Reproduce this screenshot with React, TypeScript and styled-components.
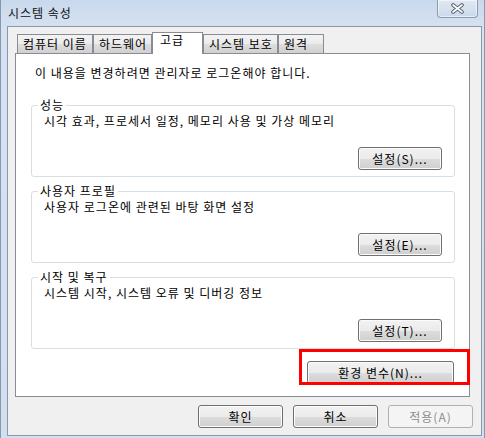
import React from 'react';
import styled, { createGlobalStyle } from 'styled-components';

const Global = createGlobalStyle`
  html, body { margin: 0; padding: 0; background: #ffffff; }
  body {
    font-family: "Noto Sans CJK KR", "Noto Sans", "Liberation Sans", sans-serif;
    font-size: 12px;
    letter-spacing: 1px;
    color: #000;
  }
  * { box-sizing: border-box; }
`;

const Window = styled.div`
  width: 485px;
  height: 438px;
  display: flex;
  flex-direction: column;
  padding: 0 2px 2px 6px;
  border-left: 1px solid #8797ad;
  border-right: 1px solid #8797ad;
  background: linear-gradient(180deg, #c9d9ed 0%, #d6e2f1 30px, #d2dfee 100%);
`;

const TitleBar = styled.div`
  height: 26px;
  flex: none;
  display: flex;
  align-items: flex-start;
  justify-content: space-between;
`;

const Title = styled.div`
  margin: 6px 0 0 1px;
  line-height: 14px;
  color: #111;
`;

const CloseButton = styled.div`
  width: 41px;
  height: 18px;
  margin-right: 4px;
  display: flex;
  align-items: center;
  justify-content: center;
  border: 1px solid #8a9ab0;
  border-top: none;
  border-radius: 0 0 4px 4px;
  background: linear-gradient(180deg, #dfe8f3 0%, #d7e2ef 50%, #cbd8e9 100%);
  box-shadow: inset 0 0 0 1px rgba(255, 255, 255, 0.55);
`;

const Client = styled.div`
  flex: 1;
  display: flex;
  flex-direction: column;
  border: 1px solid #8c98a8;
  background: #f0f0f0;
  padding: 5px 0 0 7px;
`;

const TabStrip = styled.div`
  display: flex;
  align-items: flex-end;
  margin: 0 0 -1px 2px;
  position: relative;
  z-index: 1;
`;

const Tab = styled.div<{ $w: number; $active?: boolean }>`
  width: ${(p) => p.$w}px;
  height: ${(p) => (p.$active ? 22 : 19)}px;
  margin-bottom: ${(p) => (p.$active ? 0 : 1)}px;
  border: 1px solid #898c95;
  border-bottom: none;
  padding-left: ${(p) => (p.$active ? 7 : 5)}px;
  line-height: ${(p) => (p.$active ? 14 : 17)}px;
  white-space: nowrap;
  overflow: hidden;
  background: ${(p) =>
    p.$active
      ? '#ffffff'
      : 'linear-gradient(180deg, #f3f3f3 0%, #ebebeb 50%, #dedede 51%, #d0d0d0 100%)'};
`;

const Panel = styled.div`
  margin-right: 11px;
  background: #ffffff;
  border: 1px solid #898c95;
  padding: 12px 14px 12px 15px;
  display: flex;
  flex-direction: column;
`;

const Notice = styled.div`
  line-height: 14px;
  margin-left: 4px;
`;

const Groups = styled.div`
  margin-top: 18px;
  display: flex;
  flex-direction: column;
  gap: 7px;
`;

const Group = styled.fieldset`
  margin: 0;
  min-width: 0;
  padding: 0 12px 6px 12px;
  border: 1px solid #d5dfe5;
  border-radius: 3px;
`;

const Legend = styled.legend`
  padding: 0 2px;
  margin-left: -6px;
  line-height: 14px;
  font-size: 12px;
`;

const Desc = styled.div`
  margin-top: 2px;
  line-height: 14px;
`;

const RightRow = styled.div<{ $mt: number; $pr?: number; $gap?: number }>`
  display: flex;
  justify-content: flex-end;
  margin-top: ${(p) => p.$mt}px;
  padding-right: ${(p) => p.$pr ?? 0}px;
  gap: ${(p) => p.$gap ?? 0}px;
`;

const WinButton = styled.button<{ $w: number }>`
  width: ${(p) => p.$w}px;
  height: 23px;
  padding: 0;
  font: inherit;
  font-size: 12px;
  letter-spacing: 1px;
  line-height: 21px;
  color: #000;
  border: 1px solid #707070;
  border-radius: 3px;
  background: linear-gradient(180deg, #f2f2f2 0%, #ebebeb 50%, #dddddd 51%, #cfcfcf 100%);
  box-shadow: inset 0 0 0 1px #fbfbfb;
  &:disabled {
    color: #8d8d8d;
    border-color: #adb2b5;
    background: #f4f4f4;
    box-shadow: none;
  }
`;

const Highlight = styled.div`
  position: relative;
  display: flex;
`;

const RedBox = styled.div`
  position: absolute;
  left: -8px;
  right: -16px;
  top: -12px;
  bottom: -1px;
  border: 3px solid #ff0000;
  pointer-events: none;
`;

const tabs = [
  { label: '컴퓨터 이름', w: 76 },
  { label: '하드웨어', w: 59 },
  { label: '고급', w: 51, active: true },
  { label: '시스템 보호', w: 75 },
  { label: '원격', w: 46 },
];

const groups = [
  { title: '성능', desc: '시각 효과, 프로세서 일정, 메모리 사용 및 가상 메모리', btn: '설정(S)...' },
  { title: '사용자 프로필', desc: '사용자 로그온에 관련된 바탕 화면 설정', btn: '설정(E)...' },
  { title: '시작 및 복구', desc: '시스템 시작, 시스템 오류 및 디버깅 정보', btn: '설정(T)...' },
];

const CloseIcon = () => (
  <svg width="15" height="11" viewBox="0 0 15 11">
    <path d="M3 2 L12 9 M12 2 L3 9" stroke="#5b6472" strokeWidth="3.6" strokeLinecap="round" fill="none" />
    <path d="M3 2 L12 9 M12 2 L3 9" stroke="#ffffff" strokeWidth="1.6" strokeLinecap="round" fill="none" />
  </svg>
);

export default function App() {
  return (
    <>
      <Global />
      <Window>
        <TitleBar>
          <Title>시스템 속성</Title>
          <CloseButton>
            <CloseIcon />
          </CloseButton>
        </TitleBar>
        <Client>
          <TabStrip>
            {tabs.map((t) => (
              <Tab key={t.label} $w={t.w} $active={t.active}>
                {t.label}
              </Tab>
            ))}
          </TabStrip>
          <Panel>
            <Notice>이 내용을 변경하려면 관리자로 로그온해야 합니다.</Notice>
            <Groups>
              {groups.map((g) => (
                <Group key={g.title}>
                  <Legend>{g.title}</Legend>
                  <Desc>{g.desc}</Desc>
                  <RightRow $mt={19}>
                    <WinButton $w={84}>{g.btn}</WinButton>
                  </RightRow>
                </Group>
              ))}
            </Groups>
            <RightRow $mt={12} $pr={1}>
              <Highlight>
                <WinButton $w={147}>환경 변수(N)...</WinButton>
                <RedBox />
              </Highlight>
            </RightRow>
          </Panel>
          <RightRow $mt={8} $pr={8} $gap={10}>
            <WinButton $w={85}>확인</WinButton>
            <WinButton $w={85}>취소</WinButton>
            <WinButton $w={85} disabled>
              적용(A)
            </WinButton>
          </RightRow>
        </Client>
      </Window>
    </>
  );
}
